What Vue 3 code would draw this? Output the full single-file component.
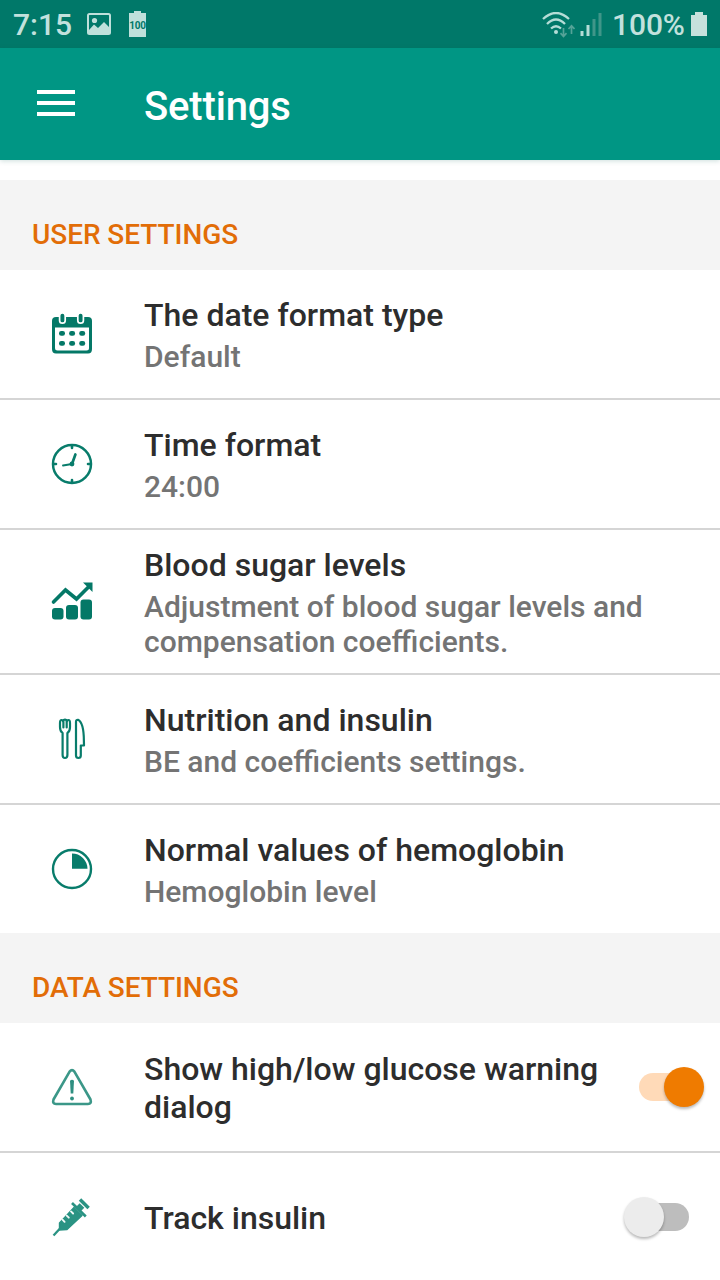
<script setup>
const userRows = [
  { icon: 'calendar', title: 'The date format type', sub: 'Default' },
  { icon: 'clock', title: 'Time format', sub: '24:00' },
  { icon: 'chart', title: 'Blood sugar levels', sub: 'Adjustment of blood sugar levels and compensation coefficients.', tall: true },
  { icon: 'cutlery', title: 'Nutrition and insulin', sub: 'BE and coefficients settings.' },
  { icon: 'pie', title: 'Normal values of hemoglobin', sub: 'Hemoglobin level' },
]
const dataRows = [
  { icon: 'warning', title: 'Show high/low glucose warning dialog', on: true },
  { icon: 'syringe', title: 'Track insulin', on: false },
]
const sections = [
  { name: 'USER SETTINGS', rows: userRows },
  { name: 'DATA SETTINGS', rows: dataRows },
]
</script>

<template>
  <div class="screen">
    <div class="status">
      <span class="time">7:15</span>
      <svg class="picture" width="24" height="22" viewBox="0 0 24 22">
        <rect x="1" y="1" width="22" height="20" rx="1.5" fill="none" stroke="#bfe0db" stroke-width="2" />
        <circle cx="7.5" cy="7.5" r="2.6" fill="#bfe0db" />
        <path d="M2 17L7 11.5L11 15L17 9L22 14V21H2Z" fill="#bfe0db" />
      </svg>
      <span class="mini-battery">100</span>
      <span class="spacer"></span>
      <svg class="wifi" width="34" height="28" viewBox="0 0 34 28" fill="none" stroke="#b5ddd7" stroke-width="2.3">
        <path d="M2 7Q15-5 28 7M6 12Q15 3 24 12M10 16.5Q15 12 20 16.5" />
        <circle cx="15" cy="20" r="2" fill="#b5ddd7" stroke="none" />
        <g stroke="#55a398" stroke-width="1.7"><path d="M22.5 16V24M19.5 21.2L22.5 24.4L25.5 21.2M30.5 22V14M27.5 17L30.5 13.8L33.5 17" /></g>
      </svg>
      <svg class="signal" width="22" height="24" viewBox="0 0 22 24">
        <path d="M.5 18h3v5h-3zM6.5 12h3v11h-3z" fill="#b5ddd7" />
        <path d="M12.5 6h3v17h-3zM18.5 0h3v23h-3z" fill="#409689" />
      </svg>
      <span class="percent">100%</span>
      <svg class="battery" width="16" height="24" viewBox="0 0 16 24"><path d="M4 0H12V3H16V24H0V3H4Z" fill="#c6e1dc" /></svg>
    </div>
    <header class="bar">
      <div class="burger"><i></i><i></i><i></i></div>
      <h1>Settings</h1>
    </header>
    <main>
      <section v-for="s in sections" :key="s.name">
        <h2>{{ s.name }}</h2>
        <div v-for="r in s.rows" :key="r.title" class="row" :class="{ tall: r.tall }">
          <svg v-if="r.icon === 'calendar'" class="icon" viewBox="0 2 64 64">
            <path d="M16 17H48Q52 17 52 21V49Q52 53.5 48 53.5H16Q12 53.5 12 49V21Q12 17 16 17Z" fill="#047867" />
            <path d="M15 27.5H49V48Q49 50.5 46.5 50.5H17.5Q15 50.5 15 48Z" fill="#fff" />
            <g fill="#047867" stroke="#fff" stroke-width="1.7"><rect x="19.6" y="13" width="5.6" height="10.2" rx="2.7" /><rect x="37.8" y="13" width="5.6" height="10.2" rx="2.7" /></g>
            <g fill="#047867"><rect v-for="n in 6" :key="n" :x="19 + ((n - 1) % 3) * 10.1" :y="n < 4 ? 31 : 41" width="6" height="4.8" rx="2.2" /></g>
          </svg>
          <svg v-else-if="r.icon === 'clock'" class="icon" viewBox="0 2 64 64" fill="none" stroke="#087c6b" stroke-linecap="round">
            <circle cx="32" cy="34" r="19" stroke-width="2.5" />
            <path d="M32 16V18M32 50V52M14 34H16M48 34H50" stroke-width="2.6" />
            <path d="M32 34L35.4 24.5" stroke-width="2.7" /><path d="M32 34L23 35.5" stroke-width="1.9" />
            <circle cx="32" cy="34" r="2.4" fill="#087c6b" stroke="none" />
          </svg>
          <svg v-else-if="r.icon === 'chart'" class="icon" viewBox="0 0 64 64" fill="#047867">
            <path d="M13.5 32L25.5 20L36.5 29L49 16.5" fill="none" stroke="#047867" stroke-width="3.6" stroke-linecap="round" stroke-linejoin="miter" />
            <path d="M43 12.5H52.5V22Z" />
            <rect x="12" y="38" width="11.5" height="11.5" rx="3" /><rect x="26" y="35" width="12" height="14.5" rx="3" /><rect x="40.5" y="29.5" width="11.5" height="20" rx="3" />
          </svg>
          <svg v-else-if="r.icon === 'cutlery'" class="icon" viewBox="0 1 64 64" fill="none" stroke="#087c6b" stroke-width="2.2" stroke-linejoin="round" stroke-linecap="round">
            <path d="M20 17V21Q20 25.5 22.6 27V49Q22.6 52 25 52Q27.4 52 27.4 49V27Q30 25.5 30 21V17Q30 14 28.4 14Q27 14 26.8 16Q26.5 13.5 25 13.5Q23.5 13.5 23.2 16Q23 14 21.6 14Q20 14 20 17ZM23.4 16V21.5M26.7 16V21.5" />
            <path d="M36 16Q36 13.7 38 13.8Q43.8 16.5 43.9 35L44 39.5H40.8V49.5Q40.8 52 38.4 52Q36 52 36 49.5Z" />
          </svg>
          <svg v-else-if="r.icon === 'pie'" class="icon" viewBox="0 1 64 64">
            <circle cx="32" cy="33" r="19" fill="none" stroke="#087c6b" stroke-width="2.4" />
            <path d="M32 17.5A15.5 15.5 0 0 1 47.5 32.8H32Z" fill="#087c6b" />
          </svg>
          <svg v-else-if="r.icon === 'warning'" class="icon" viewBox="0 -1 64 64">
            <path d="M29.6 15.6Q32 12.6 34.4 15.6L50.5 43.5Q51.8 48 48 48H16Q12.2 48 13.5 43.5Z" fill="none" stroke="#3b9788" stroke-width="2.6" stroke-linejoin="round" />
            <path d="M30 24.8Q32 22.8 34 24.8L33.3 37.5H30.7Z" fill="#2f8f81" /><circle cx="32" cy="42.5" r="1.9" fill="#2f8f81" />
          </svg>
          <svg v-else class="icon" viewBox="0 1 64 64" fill="none" stroke="#2a9383">
            <path d="M13.5 51.5L20 44.5" stroke-width="2.3" />
            <path d="M19.5 39L34 23.5L42 31.5L27 45.5L19.5 46Z" fill="#2a9383" stroke="#2a9383" stroke-width="1.4" stroke-linejoin="round" />
            <path d="M32 19L45.8 32.5" stroke-width="2.6" />
            <path d="M38 25.5L42 21.5" stroke-width="6.5" /><path d="M40 15.5L48.6 24" stroke-width="3.4" />
            <path d="M22.5 35.7L24.6 37.8M26.7 31.6L28.8 33.7M31 27.4L33.1 29.5" stroke="#f2faf8" stroke-width="1.9" stroke-linecap="round" />
          </svg>
          <div class="copy">
            <div class="title">{{ r.title }}</div>
            <div v-if="r.sub" class="sub">{{ r.sub }}</div>
          </div>
          <div v-if="r.on !== undefined" class="switch" :class="{ on: r.on }"><b></b></div>
        </div>
      </section>
    </main>
  </div>
</template>

<style scoped>
.screen { width: 720px; height: 1280px; overflow: hidden; background: #fff; font-family: Roboto, sans-serif; font-weight: 500; }
.status { height: 48px; box-sizing: border-box; display: flex; align-items: center; background: #007869; color: #c2e1dd; padding: 0 13px; }
.time { font-size: 30px; width: 74px; letter-spacing: 0; }
.picture { margin-top: 0; }
.mini-battery { position: relative; margin: 2px 0 0 18px; width: 17px; height: 24px; background: #bfe0db; color: #007869; font-size: 10px; letter-spacing: -.3px; line-height: 25px; font-weight: 700; text-align: center; }
.mini-battery::before { content: ''; position: absolute; top: -2px; left: 5px; width: 7px; height: 2px; background: #bfe0db; }
.spacer { flex: 1; }
.signal { margin-left: 5px; margin-top: 2px; }
.wifi { margin-top: 3px; }
.percent { font-size: 30px; letter-spacing: -.1px; margin: 0 6px 0 10px; width: 73px; white-space: nowrap; }
.bar { height: 112px; display: flex; align-items: center; background: #009684; position: relative; box-shadow: 0 1px 5px rgba(0,90,80,.2); }
.burger { width: 38px; margin: -2px 69px 0 37px; display: flex; flex-direction: column; gap: 7px; }
.burger i { height: 4px; background: #fff; }
h1 { margin: 5px 0 0; color: #fff; font-size: 40px; line-height: 48px; font-weight: 500; letter-spacing: -.15px; }
main { padding-top: 20px; }
h2 { margin: 0; height: 90px; box-sizing: border-box; padding: 37px 32px 0; background: #f4f4f4; color: #e26d07; font-size: 28px; line-height: 36px; font-weight: 500; letter-spacing: -.06px; }
.row { height: 130px; box-sizing: border-box; border-bottom: 2px solid #d5d5d5; display: flex; align-items: center; }
.row.tall { height: 145px; }
.row:last-child { height: 128px; border: 0; }
.icon { width: 64px; height: 64px; margin: 0 40px; flex: none; }
.copy { width: 520px; padding-top: 2px; flex: none; }
.title { color: #2d2d2d; font-size: 32px; line-height: 38px; }
.sub { color: #747474; font-size: 30px; line-height: 35px; margin-top: 5px; margin-bottom: 1px; }
.switch { position: relative; width: 50px; height: 28px; margin-left: -25px; border-radius: 14px; background: #bdbdbd; }
.switch b { position: absolute; top: -6px; left: -15px; width: 40px; height: 40px; border-radius: 50%; background: #ececec; box-shadow: 0 2px 3px rgba(0,0,0,.28); }
.switch.on { background: #ffdab8; }
.switch.on b { left: 25px; background: #ef7b00; }
</style>

<style>
body { margin: 0; background: #fff; }
</style>
